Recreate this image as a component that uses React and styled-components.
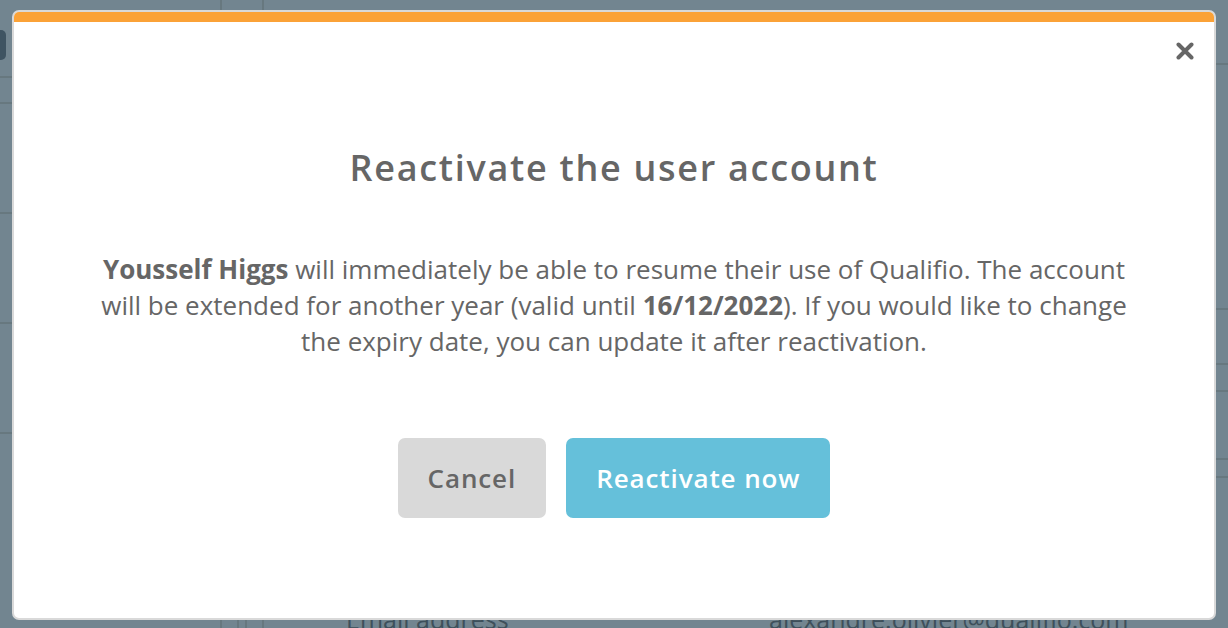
import React from 'react'
import styled, { createGlobalStyle } from 'styled-components'

const GlobalStyle = createGlobalStyle`
  html, body {
    margin: 0;
    padding: 0;
    background: #728590;
    overflow: hidden;
  }
`

const Page = styled.div`
  position: relative;
  width: 1228px;
  height: 628px;
  overflow: hidden;
  display: flex;
  background: #728590;
  font-family: 'Open Sans', 'Liberation Sans', sans-serif;
`

const Sidebar = styled.div`
  width: 220px;
  display: flex;
  flex-direction: column;
`

const Gutter = styled.div`
  width: 40px;
  border-left: 2px solid #67787f;
  border-right: 2px solid #67787f;
  display: flex;
  justify-content: center;
  gap: 6px;
`

const GutterLine = styled.div`
  width: 2px;
  margin-top: 610px;
  background: #67787f;
`

const Main = styled.div`
  flex: 1;
  display: flex;
  flex-direction: column;
`

const Row = styled.div`
  height: ${(props) => props.h}px;
  flex-shrink: 0;
  border-bottom: 2px solid #67787f;
  box-sizing: border-box;
  display: flex;
  align-items: flex-end;
`

const Handle = styled.div`
  width: 6px;
  height: 30px;
  margin-bottom: 16px;
  background: #3f5462;
  border-radius: 0 5px 5px 0;
`

const Field = styled.div`
  display: flex;
  padding-top: 124px;
  font-size: 25px;
  color: #3e505b;
`

const FieldLabel = styled.span`
  width: 423px;
  padding-left: 82px;
`

const Modal = styled.div`
  position: absolute;
  left: 12px;
  top: 10px;
  width: 1204px;
  height: 610px;
  box-sizing: border-box;
  background: #fff;
  border: 2px solid #d9d9d9;
  border-radius: 7px;
  overflow: hidden;
  display: flex;
  flex-direction: column;
  align-items: center;
`

const TopBar = styled.div`
  align-self: stretch;
  height: 10px;
  background: #fba237;
  flex-shrink: 0;
`

const Header = styled.div`
  align-self: stretch;
  display: flex;
  justify-content: flex-end;
  padding: 20px 20px 0 0;
`

const CloseButton = styled.button`
  width: 18px;
  height: 18px;
  padding: 0;
  border: none;
  background: none;
  cursor: pointer;
  display: flex;
`

const Title = styled.h2`
  margin: 86px 0 0;
  font-weight: 600;
  font-size: 36px;
  line-height: 44px;
  letter-spacing: 1.7px;
  color: #666;
`

const Message = styled.p`
  margin: 61px 0 0;
  max-width: 1040px;
  text-align: center;
  font-size: 26px;
  line-height: 36px;
  color: #666;

  strong {
    font-weight: 700;
  }
`

const Actions = styled.div`
  display: flex;
  gap: 20px;
  margin-top: 79px;
`

const Button = styled.button`
  height: 80px;
  padding: 0 30px;
  border: none;
  border-radius: 7px;
  font-family: 'Open Sans', 'Liberation Sans', sans-serif;
  font-weight: 600;
  font-size: 26px;
  letter-spacing: 0.9px;
  cursor: pointer;
  background: ${(props) => (props.primary ? '#65c0da' : '#d9d9d9')};
  color: ${(props) => (props.primary ? '#fff' : '#666')};
`

const CloseIcon = () => (
  <svg width="18" height="18" viewBox="0 0 18 18">
    <path
      d="M2.5 2.5 L15.5 15.5 M15.5 2.5 L2.5 15.5"
      stroke="#666"
      strokeWidth="4"
      strokeLinecap="round"
    />
  </svg>
)

const App = () => (
  <Page>
    <GlobalStyle />
    <Sidebar>
      <Row h={78}>
        <Handle />
      </Row>
      <Row h={26} />
      <Row h={110} />
      <Row h={110} />
      <Row h={110} />
    </Sidebar>
    <Gutter>
      <GutterLine />
      <GutterLine />
    </Gutter>
    <Main>
      <Row h={65} />
      <Row h={245} />
      <Row h={55} />
      <Row h={27} />
      <Row h={68} />
      <Row h={18} />
      <Field>
        <FieldLabel>Email address</FieldLabel>
        <span>alexandre.olivier@qualifio.com</span>
      </Field>
    </Main>

    <Modal>
      <TopBar />
      <Header>
        <CloseButton aria-label="Close">
          <CloseIcon />
        </CloseButton>
      </Header>
      <Title>Reactivate the user account</Title>
      <Message>
        <strong>Yousself Higgs</strong> will immediately be able to resume
        their use of Qualifio. The account will be extended for another year
        (valid until <strong>16/12/2022</strong>). If you would like to change
        the expiry date, you can update it after reactivation.
      </Message>
      <Actions>
        <Button>Cancel</Button>
        <Button primary>Reactivate now</Button>
      </Actions>
    </Modal>
  </Page>
)

export default App
